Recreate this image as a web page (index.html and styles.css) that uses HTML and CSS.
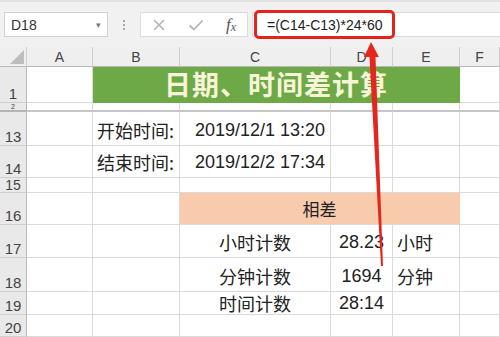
FILE: index.html
```html
<!DOCTYPE html>
<html lang="zh">
<head>
<meta charset="UTF-8" />
<title>日期、时间差计算</title>
<link rel="stylesheet" href="styles.css">
</head>
<body>

<div id="app">
  <div class="toolbar">
    <div class="namebox"><span>D18</span><span class="drop">&#9662;</span></div>
    <div class="dots"><i></i><i></i><i></i></div>
    <div class="icons">
      <svg class="ico" width="14" height="14" viewBox="0 0 14 14"><path d="M2 2 L12 12 M12 2 L2 12" stroke="#b5b5b5" stroke-width="1.6" fill="none"/></svg>
      <svg class="ico" width="16" height="14" viewBox="0 0 16 14"><path d="M1.5 7.5 L6 11.5 L14.5 2.5" stroke="#b5b5b5" stroke-width="1.8" fill="none"/></svg>
      <span class="fx">f<sub>x</sub></span>
    </div>
    <div class="formula">
      <span class="mark">=(C14-C13)*24*60</span>
    </div>
  </div>

  <div class="sheet">
    <!-- column headers -->
    <div class="ch corner"><svg width="14" height="14" viewBox="0 0 14 14"><path d="M14 0 L14 14 L0 14 Z" fill="#bdbdbd"/></svg></div>
    <div class="ch">A</div>
    <div class="ch">B</div>
    <div class="ch">C</div>
    <div class="ch">D</div>
    <div class="ch">E</div>
    <div class="ch">F</div>

    <!-- row 1 -->
    <div class="rh">1</div>
    <div class="c"></div>
    <div class="c title span4">日期、时间差计算</div>
    <div class="c"></div>

    <!-- row 2 -->
    <div class="rh r2">2</div>
    <div class="c r2"></div><div class="c r2"></div><div class="c r2"></div>
    <div class="c r2"></div><div class="c r2"></div><div class="c r2"></div>

    <!-- row 13 -->
    <div class="rh">13</div>
    <div class="c"></div>
    <div class="c txt">开始时间:</div>
    <div class="c txt num">2019/12/1 13:20</div>
    <div class="c"></div><div class="c"></div><div class="c"></div>

    <!-- row 14 -->
    <div class="rh">14</div>
    <div class="c"></div>
    <div class="c txt">结束时间:</div>
    <div class="c txt num">2019/12/2 17:34</div>
    <div class="c"></div><div class="c"></div><div class="c"></div>

    <!-- row 15 -->
    <div class="rh short">15</div>
    <div class="c"></div><div class="c"></div><div class="c"></div>
    <div class="c"></div><div class="c"></div><div class="c"></div>

    <!-- row 16 -->
    <div class="rh">16</div>
    <div class="c"></div><div class="c"></div>
    <div class="c diff span3">相差</div>
    <div class="c"></div>

    <!-- row 17 -->
    <div class="rh">17</div>
    <div class="c"></div><div class="c"></div>
    <div class="c txt mid">小时计数</div>
    <div class="c txt mid num">28.23</div>
    <div class="c txt">小时</div>
    <div class="c"></div>

    <!-- row 18 -->
    <div class="rh">18</div>
    <div class="c"></div><div class="c"></div>
    <div class="c txt mid">分钟计数</div>
    <div class="c txt mid num">1694</div>
    <div class="c txt">分钟</div>
    <div class="c"></div>

    <!-- row 19 -->
    <div class="rh">19</div>
    <div class="c"></div><div class="c"></div>
    <div class="c txt mid tight">时间计数</div>
    <div class="c txt mid num tight">28:14</div>
    <div class="c"></div><div class="c"></div>

    <!-- row 20 -->
    <div class="rh">20</div>
    <div class="c"></div><div class="c"></div><div class="c"></div>
    <div class="c"></div><div class="c"></div><div class="c"></div>
  </div>

  <svg class="arrow" width="500" height="337" viewBox="0 0 500 337">
    <polygon points="371,42 379,57 375.5,57 383,266 381,266 369.5,57 364,57" fill="#e5261d"/>
  </svg>
</div>

</body>
</html>
```

FILE: styles.css
```css
body {
  margin: 0;
  padding: 0;
  font-family: "Liberation Sans", "Noto Sans CJK SC", sans-serif;
  background: #fff;
}
#app {
  position: relative;
  width: 500px;
  height: 337px;
  overflow: hidden;
}
.toolbar {
  height: 47px;
  box-sizing: border-box;
  background: #f1f1f1;
  border-top: 2px solid #e2e2e2;
  display: flex;
  align-items: center;
  padding-left: 4px;
}
.namebox {
  width: 104px;
  height: 25px;
  box-sizing: border-box;
  background: #fff;
  border: 1px solid #d2d2d2;
  display: flex;
  align-items: center;
  justify-content: space-between;
  padding: 0 6px 0 6px;
  font-size: 14px;
  color: #333;
}
.namebox .drop {
  font-size: 9px;
  color: #777;
}
.dots {
  width: 32px;
  display: flex;
  flex-direction: column;
  align-items: center;
  gap: 2px;
}
.dots i {
  width: 2px;
  height: 2px;
  background: #a8a8a8;
}
.icons {
  width: 108px;
  height: 25px;
  box-sizing: border-box;
  background: #fff;
  border: 1px solid #dcdcdc;
  display: flex;
  align-items: center;
  gap: 22px;
  padding-left: 11px;
}
.fx {
  font-family: "Liberation Serif", serif;
  font-style: italic;
  font-size: 17px;
  color: #555;
}
.fx sub {
  font-size: 12px;
  vertical-align: -1px;
}
.formula {
  flex: 1;
  height: 25px;
  margin-left: 4px;
  box-sizing: border-box;
  background: #fff;
  border: 1px solid #dcdcdc;
  border-right: none;
  display: flex;
  align-items: center;
}
.mark {
  flex: none;
  width: 141px;
  height: 29px;
  box-sizing: border-box;
  margin-left: 1px;
  border: 3px solid #e3231c;
  border-radius: 5px;
  padding-left: 10px;
  display: flex;
  align-items: center;
  font-size: 14px;
  color: #222;
}
.sheet {
  display: grid;
  grid-template-columns: 27px 66px 87px 151px 62px 67px 40px;
  grid-template-rows: 20px 36px 9px 34px 32px 15px 32px 33px 34px 23px 22px;
}
.ch {
  background: #efefef;
  border-right: 1px solid #cfcfcf;
  border-bottom: 1px solid #b8b8b8;
  display: flex;
  align-items: center;
  justify-content: center;
  font-size: 14px;
  color: #444;
  box-sizing: border-box;
}
.corner {
  justify-content: flex-end;
  align-items: flex-end;
  padding: 0 2px 2px 0;
}
.rh {
  background: #e9e9e9;
  border-right: 1px solid #b8b8b8;
  border-bottom: 1px solid #cfcfcf;
  box-sizing: border-box;
  display: flex;
  align-items: flex-end;
  justify-content: center;
  font-size: 15px;
  line-height: 17px;
  color: #444;
  overflow: hidden;
}
.rh.short {
  font-size: 14px;
  line-height: 14px;
}
.rh.r2 {
  border-bottom: 2px solid #b5b5b5;
  font-size: 7px;
  line-height: 7px;
}
.c {
  border-right: 1px solid #dadada;
  border-bottom: 1px solid #dadada;
  box-sizing: border-box;
}
.c.r2 {
  border-bottom: 2px solid #c6c6c6;
}
.span4 {
  grid-column: span 4;
}
.span3 {
  grid-column: span 3;
}
.title {
  background: #6ea947;
  border-right-color: #6ea947;
  border-bottom-color: #6ea947;
  color: #f8f4d8;
  font-family: "Noto Sans CJK SC", sans-serif;
  font-weight: 700;
  font-size: 27px;
  letter-spacing: 1px;
  display: flex;
  align-items: center;
  justify-content: center;
  padding-bottom: 2px;
}
.diff {
  background: #f8cbad;
  border-right-color: #f8cbad;
  display: flex;
  align-items: center;
  justify-content: center;
  font-family: "Noto Sans CJK SC", sans-serif;
  font-size: 17px;
  color: #222;
}
.txt {
  display: flex;
  align-items: flex-end;
  padding: 0 0 5px 4px;
  font-family: "Noto Sans CJK SC", sans-serif;
  font-size: 18px;
  line-height: 20px;
  color: #222;
  white-space: nowrap;
}
.txt.num {
  font-family: "Liberation Sans", sans-serif;
  padding-left: 15px;
}
.txt.mid {
  justify-content: center;
  padding-left: 0;
}
.txt.tight {
  padding-bottom: 1px;
}
.arrow {
  position: absolute;
  top: 0;
  left: 0;
  pointer-events: none;
}
```
